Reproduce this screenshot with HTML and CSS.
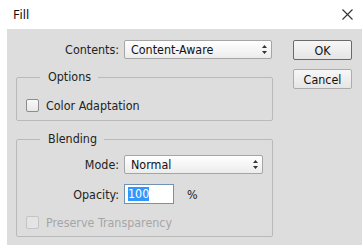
FILE: index.html
```html
<!DOCTYPE html>
<html lang="en">
<head>
    <meta charset="UTF-8">
    <title>Fill</title>
    <link rel="stylesheet" href="styles.css">
</head>
<body>
    <div class="dialog">
        <div class="titlebar">
            <span class="title">Fill</span>
            <svg class="close" width="11" height="11" viewBox="0 0 11 11">
                <path d="M0.5 0.5 L10.5 10.5 M10.5 0.5 L0.5 10.5" stroke="#333" stroke-width="1.1" fill="none"/>
            </svg>
        </div>

        <div class="panel">
            <div class="main">
                <div class="field-row">
                    <label>Contents:</label>
                    <div class="select">
                        <span>Content-Aware</span>
                        <svg class="arrows" width="5" height="9" viewBox="0 0 5 9"><path d="M2.5 0 L5 3 H0 Z M2.5 9 L5 6 H0 Z" fill="#333"/></svg>
                    </div>
                </div>

                <fieldset class="group options">
                    <legend>Options</legend>
                    <label class="check"><span class="box"></span>Color Adaptation</label>
                </fieldset>

                <fieldset class="group blending">
                    <legend>Blending</legend>
                    <div class="field-row inner">
                        <label>Mode:</label>
                        <div class="select">
                            <span>Normal</span>
                            <svg class="arrows" width="5" height="9" viewBox="0 0 5 9"><path d="M2.5 0 L5 3 H0 Z M2.5 9 L5 6 H0 Z" fill="#333"/></svg>
                        </div>
                    </div>
                    <div class="field-row inner">
                        <label>Opacity:</label>
                        <div class="opacity">
                            <span class="text-input"><span class="selected">100</span></span>
                            <span class="unit">%</span>
                        </div>
                    </div>
                    <label class="check disabled"><span class="box"></span>Preserve Transparency</label>
                </fieldset>
            </div>

            <div class="buttons">
                <button class="btn default">OK</button>
                <button class="btn">Cancel</button>
            </div>
        </div>
    </div>
</body>
</html>
```

FILE: styles.css
```css
* {
    margin: 0;
    padding: 0;
    box-sizing: border-box;
}

body {
    background: #fff;
    font-family: Tahoma, "DejaVu Sans Condensed", "DejaVu Sans", sans-serif;
    font-size: 12.4px;
    color: #222;
}

.titlebar {
    height: 29px;
    display: flex;
    align-items: center;
    justify-content: space-between;
    padding: 0 10px 0 13px;
    font-family: "Segoe UI", "Noto Sans", sans-serif;
    font-size: 12.5px;
    color: #111;
}

.panel {
    margin: 0 1px 0 7px;
    height: 216px;
    background: #dddddd;
    display: flex;
    gap: 20px;
    padding: 11px 0 0 9px;
}

.main {
    width: 257px;
    display: flex;
    flex-direction: column;
}

.field-row {
    display: grid;
    grid-template-columns: 103px 148px;
    column-gap: 5px;
    align-items: center;
}

.field-row label {
    text-align: right;
}

.field-row.inner {
    grid-template-columns: 102px 139px;
}

.select {
    height: 19px;
    border: 1px solid #a5a5a5;
    border-radius: 2px;
    background: linear-gradient(#ffffff, #ececec);
    display: flex;
    align-items: center;
    justify-content: space-between;
    padding: 0 4px 0 6px;
    color: #111;
}

.group {
    border: 1px solid #b9b9b9;
    border-radius: 2px;
    margin-top: 10px;
}

.group legend {
    margin-left: 14px;
    padding: 0 7px 0 8px;
    line-height: 16px;
}

.options {
    padding: 11px 0 6px 9px;
}

.blending {
    padding: 8px 0 5px 9px;
}

.blending .field-row {
    margin-left: -9px;
}

.blending .field-row + .field-row {
    margin-top: 10px;
}

.check {
    height: 18px;
    display: flex;
    align-items: center;
    gap: 7px;
}

.blending .check {
    margin-top: 9px;
}

.box {
    width: 13px;
    height: 13px;
    border: 1px solid #8c8c8c;
    border-radius: 2px;
    background: linear-gradient(#f8f8f8, #e8e8e8);
}

.check.disabled {
    color: #a6a6a6;
}

.check.disabled .box {
    border-color: #c4c4c4;
    background: #e4e4e4;
}

.opacity {
    display: flex;
    align-items: center;
    gap: 13px;
}

.text-input {
    width: 50px;
    height: 20px;
    border: 1px solid #6f93b8;
    background: #fff;
    display: flex;
    align-items: center;
    padding-left: 3px;
}

.selected {
    background: #3297fd;
    color: #fff;
    line-height: 14px;
}

.buttons {
    width: 59px;
    display: flex;
    flex-direction: column;
    gap: 9px;
}

.btn {
    height: 20px;
    border: 1px solid #acacac;
    border-radius: 2px;
    background: linear-gradient(#f7f7f7, #e5e5e5);
    font: inherit;
    color: #111;
}

.btn.default {
    border-color: #6a6a6a;
}
```
